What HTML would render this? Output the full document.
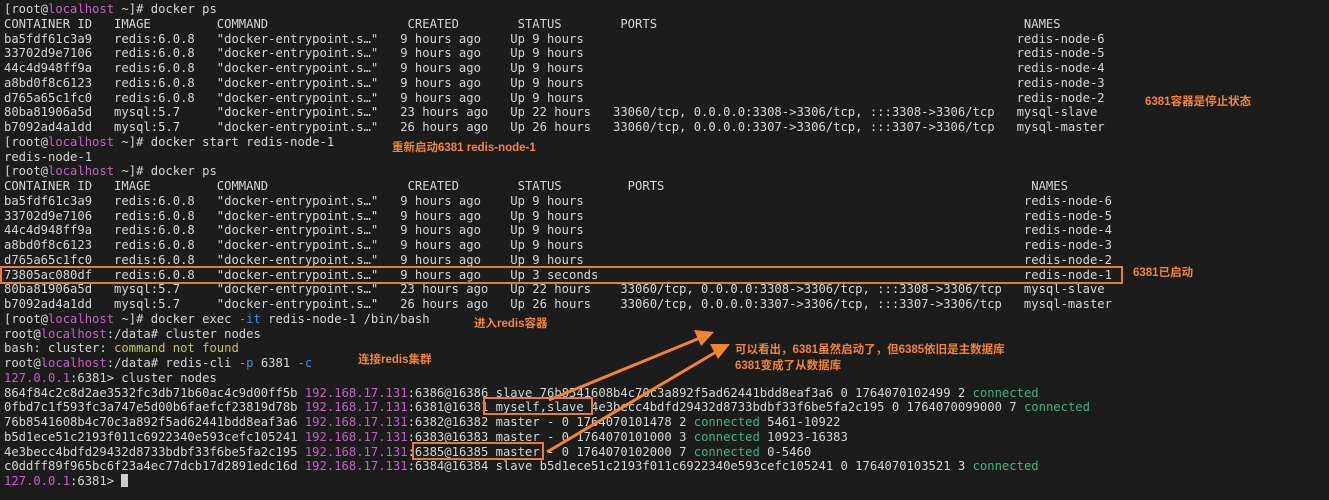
<!DOCTYPE html>
<html><head><meta charset="utf-8"><style>
html,body{margin:0;padding:0;background:#1c1c1c;width:1329px;height:500px;overflow:hidden;position:relative}
pre{position:absolute;left:4px;top:2px;margin:0;font-family:"DejaVu Sans Mono","Liberation Mono",monospace;font-size:12.2px;line-height:14.75px;color:#d4d4d4;white-space:pre}
.m{color:#c45ec4}.b{color:#3a8fd6}.y{color:#c8c43c}.g{color:#2fb77a}
.n{position:absolute;color:#f2842c;font-weight:bold;font-family:"Liberation Sans","Noto Sans CJK SC",sans-serif;font-size:11.5px;line-height:15px;white-space:nowrap}
.box{position:absolute;border:2px solid #e87c2a;box-sizing:border-box}
.cur{display:inline-block;width:7px;height:13px;background:#ccc;vertical-align:-2px}
</style></head><body>
<pre>[root@<span class="m">localhost</span> ~]# docker ps
CONTAINER ID   IMAGE         COMMAND                   CREATED        STATUS        PORTS                                                  NAMES
ba5fdf61c3a9   redis:6.0.8   "docker-entrypoint.s…"   9 hours ago    Up 9 hours                                                           redis-node-6
33702d9e7106   redis:6.0.8   "docker-entrypoint.s…"   9 hours ago    Up 9 hours                                                           redis-node-5
44c4d948ff9a   redis:6.0.8   "docker-entrypoint.s…"   9 hours ago    Up 9 hours                                                           redis-node-4
a8bd0f8c6123   redis:6.0.8   "docker-entrypoint.s…"   9 hours ago    Up 9 hours                                                           redis-node-3
d765a65c1fc0   redis:6.0.8   "docker-entrypoint.s…"   9 hours ago    Up 9 hours                                                           redis-node-2
80ba81906a5d   mysql:5.7     "docker-entrypoint.s…"   23 hours ago   Up 22 hours   33060/tcp, 0.0.0.0:3308-&gt;3306/tcp, :::3308-&gt;3306/tcp   mysql-slave
b7092ad4a1dd   mysql:5.7     "docker-entrypoint.s…"   26 hours ago   Up 26 hours   33060/tcp, 0.0.0.0:3307-&gt;3306/tcp, :::3307-&gt;3306/tcp   mysql-master
[root@<span class="m">localhost</span> ~]# docker start redis-node-1
redis-node-1
[root@<span class="m">localhost</span> ~]# docker ps
CONTAINER ID   IMAGE         COMMAND                   CREATED        STATUS         PORTS                                                  NAMES
ba5fdf61c3a9   redis:6.0.8   "docker-entrypoint.s…"   9 hours ago    Up 9 hours                                                            redis-node-6
33702d9e7106   redis:6.0.8   "docker-entrypoint.s…"   9 hours ago    Up 9 hours                                                            redis-node-5
44c4d948ff9a   redis:6.0.8   "docker-entrypoint.s…"   9 hours ago    Up 9 hours                                                            redis-node-4
a8bd0f8c6123   redis:6.0.8   "docker-entrypoint.s…"   9 hours ago    Up 9 hours                                                            redis-node-3
d765a65c1fc0   redis:6.0.8   "docker-entrypoint.s…"   9 hours ago    Up 9 hours                                                            redis-node-2
73805ac080df   redis:6.0.8   "docker-entrypoint.s…"   9 hours ago    Up 3 seconds                                                          redis-node-1
80ba81906a5d   mysql:5.7     "docker-entrypoint.s…"   23 hours ago   Up 22 hours    33060/tcp, 0.0.0.0:3308-&gt;3306/tcp, :::3308-&gt;3306/tcp   mysql-slave
b7092ad4a1dd   mysql:5.7     "docker-entrypoint.s…"   26 hours ago   Up 26 hours    33060/tcp, 0.0.0.0:3307-&gt;3306/tcp, :::3307-&gt;3306/tcp   mysql-master
[root@<span class="m">localhost</span> ~]# docker exec <span class="b">-it</span> redis-node-1 /bin/bash
root@<span class="m">localhost</span>:/data# cluster nodes
bash: cluster: <span class="y">command not found</span>
root@<span class="m">localhost</span>:/data# redis-cli <span class="b">-p</span> 6381 <span class="b">-c</span>
<span class="m">127.0.0.1</span>:6381&gt; cluster nodes
864f84c2c8d2ae3532fc3db71b60ac4c9d00ff5b <span class="m">192.168.17.131</span>:6386@16386 slave 76b8541608b4c70c3a892f5ad62441bdd8eaf3a6 0 1764070102499 2 <span class="g">connected</span>
0fbd7c1f593fc3a747e5d00b6faefcf23819d78b <span class="m">192.168.17.131</span>:6381@16381 myself,slave 4e3becc4bdfd29432d8733bdbf33f6be5fa2c195 0 1764070099000 7 <span class="g">connected</span>
76b8541608b4c70c3a892f5ad62441bdd8eaf3a6 <span class="m">192.168.17.131</span>:6382@16382 master - 0 1764070101478 2 <span class="g">connected</span> 5461-10922
b5d1ece51c2193f011c6922340e593cefc105241 <span class="m">192.168.17.131</span>:6383@16383 master - 0 1764070101000 3 <span class="g">connected</span> 10923-16383
4e3becc4bdfd29432d8733bdbf33f6be5fa2c195 <span class="m">192.168.17.131</span>:6385@16385 master - 0 1764070102000 7 <span class="g">connected</span> 0-5460
c0ddff89f965bc6f23a4ec77dcb17d2891edc16d <span class="m">192.168.17.131</span>:6384@16384 slave b5d1ece51c2193f011c6922340e593cefc105241 0 1764070103521 3 <span class="g">connected</span>
<span class="m">127.0.0.1</span>:6381&gt; <span class="cur"></span></pre>
<div class="box" style="left:0;top:266px;width:1123px;height:18px"></div>
<div class="box" style="left:483px;top:397px;width:110px;height:18px"></div>
<div class="box" style="left:412px;top:442px;width:132px;height:18px"></div>
<svg style="position:absolute;left:0;top:0" width="1329" height="500">
<g stroke="#f2842c" stroke-width="3" fill="#f2842c">
<line x1="549" y1="400" x2="700" y2="338"/>
<line x1="547" y1="452" x2="716" y2="352"/>
</g>
<polygon fill="#f2842c" points="714,332 694,330 701,346"/>
<polygon fill="#f2842c" points="730,344 710,344 718,359"/>
</svg>
<div class="n" style="left:1145px;top:95px">6381容器是停止状态</div>
<div class="n" style="left:392px;top:141px">重新启动6381 redis-node-1</div>
<div class="n" style="left:1133px;top:266px">6381已启动</div>
<div class="n" style="left:474px;top:317px">进入redis容器</div>
<div class="n" style="left:358px;top:353px">连接redis集群</div>
<div class="n" style="left:735px;top:343px">可以看出，6381虽然启动了，但6385依旧是主数据库</div>
<div class="n" style="left:735px;top:359px">6381变成了从数据库</div>
</body></html>
